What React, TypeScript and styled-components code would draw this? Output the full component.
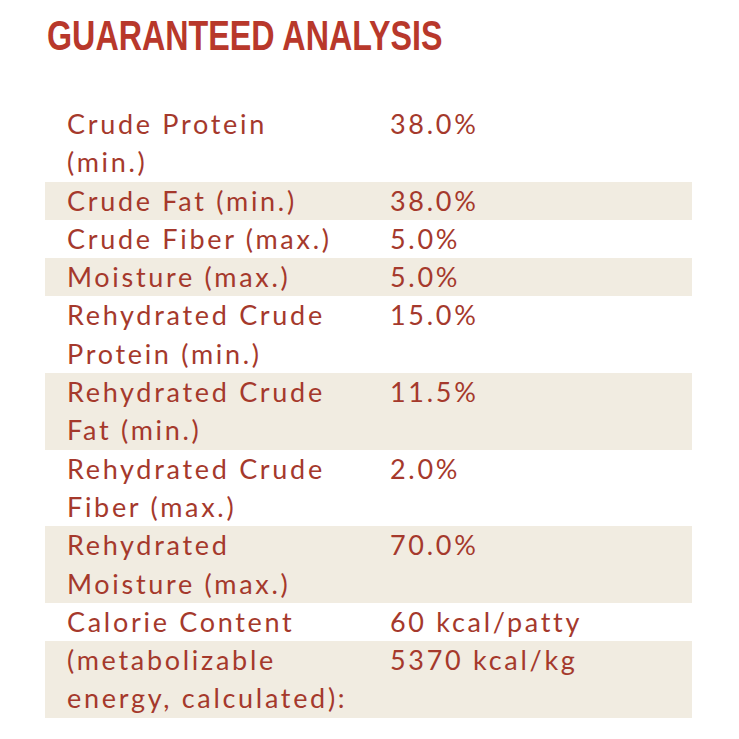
import React from "react";
import styled, { createGlobalStyle } from "styled-components";

const Global = createGlobalStyle`
  html, body { margin: 0; padding: 0; background: #ffffff; }
  body { font-family: "Lato", "Liberation Sans", sans-serif; }
`;

const Page = styled.div`
  width: 739px;
  height: 739px;
  box-sizing: border-box;
  padding: 0 47px 0 45px;
  display: flex;
  flex-direction: column;
  align-items: stretch;
`;

const Title = styled.h1`
  align-self: flex-start;
  margin: 12px 0 0 2px;
  font-family: "Liberation Sans", sans-serif;
  font-weight: 700;
  font-size: 42px;
  line-height: 48px;
  letter-spacing: 0px;
  color: #b8382b;
  white-space: nowrap;
  transform: scaleX(0.768);
  transform-origin: left center;
`;

const Table = styled.div`
  margin-top: 45px;
  display: flex;
  flex-direction: column;
`;

const Row = styled.div<{ $shaded: boolean }>`
  display: grid;
  grid-template-columns: 323px 1fr;
  padding-left: 22px;
  background: ${(p) => (p.$shaded ? "#f1ece1" : "transparent")};
  color: #a5392c;
  font-size: 27px;
  line-height: 38.3px;
  letter-spacing: 2.7px;
`;

const Cell = styled.div`
  display: flex;
  flex-direction: column;
`;

const Line = styled.span`
  display: block;
  white-space: nowrap;
`;

const rows: { label: string[]; value: string[] }[] = [
  { label: ["Crude Protein", "(min.)"], value: ["38.0%"] },
  { label: ["Crude Fat (min.)"], value: ["38.0%"] },
  { label: ["Crude Fiber (max.)"], value: ["5.0%"] },
  { label: ["Moisture (max.)"], value: ["5.0%"] },
  { label: ["Rehydrated Crude", "Protein (min.)"], value: ["15.0%"] },
  { label: ["Rehydrated Crude", "Fat (min.)"], value: ["11.5%"] },
  { label: ["Rehydrated Crude", "Fiber (max.)"], value: ["2.0%"] },
  { label: ["Rehydrated", "Moisture (max.)"], value: ["70.0%"] },
  { label: ["Calorie Content"], value: ["60 kcal/patty"] },
  { label: ["(metabolizable", "energy, calculated):"], value: ["5370 kcal/kg"] },
];

export default function App() {
  return (
    <>
      <Global />
      <Page>
        <Title>GUARANTEED ANALYSIS</Title>
        <Table>
          {rows.map((r, i) => (
            <Row key={i} $shaded={i % 2 === 1}>
              <Cell>
                {r.label.map((l, j) => (
                  <Line key={j}>{l}</Line>
                ))}
              </Cell>
              <Cell>
                {r.value.map((v, j) => (
                  <Line key={j}>{v}</Line>
                ))}
              </Cell>
            </Row>
          ))}
        </Table>
      </Page>
    </>
  );
}
